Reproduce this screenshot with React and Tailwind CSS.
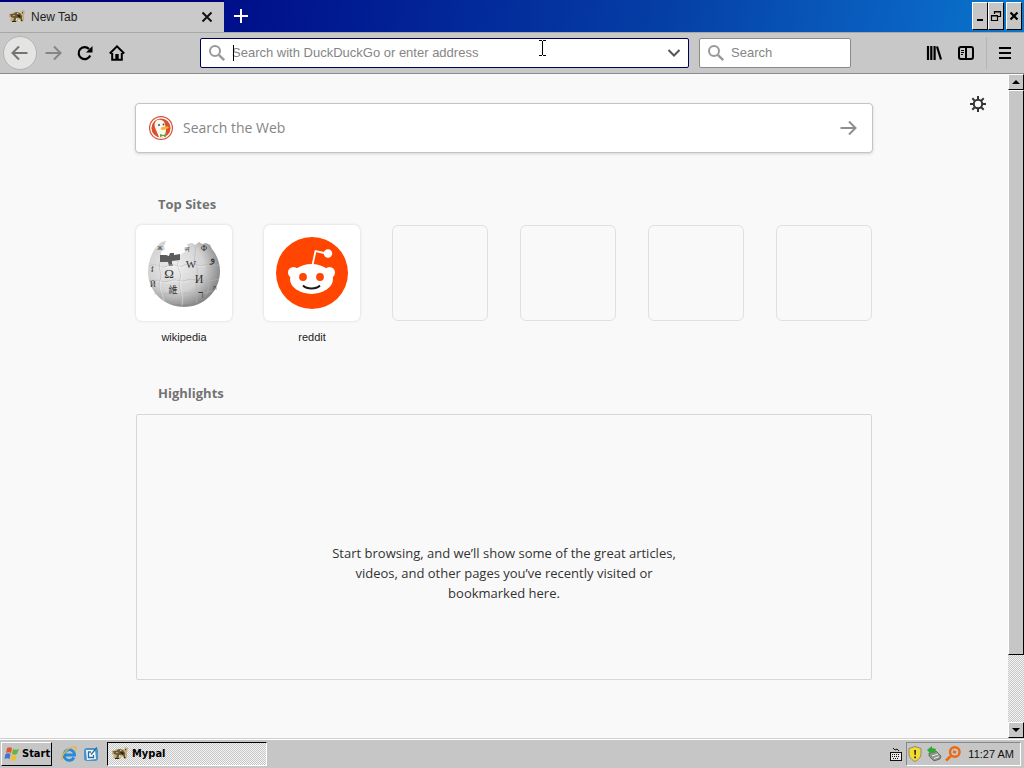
import React, { useState } from "react";

const RAISED = "bg-[#c6c6c6] border border-t-white border-l-white border-r-black border-b-black";
const CHECKER = "bg-[repeating-conic-gradient(#c6c6c6_0_25%,#f4f4f4_0_50%)] bg-[length:2px_2px]";

const SITES = [{ name: "wikipedia", Icon: WikipediaIcon }, { name: "reddit", Icon: RedditIcon }, null, null, null, null];

function MypalIcon() {
  return (
    <svg width="16" height="16" viewBox="0 0 16 16" aria-hidden="true" className="shrink-0">
      <path d="M0 5l3-1 2-1 4 0 3 1 1-3 3 1-1 4 0 4-1 3-2 0-1-2-3 2-4 0-3-1 1-3-2-1z" fill="#c2ae80" />
      <path d="M1 5l3 0 3-2 4 1 2 3 0 4-2-1-1-2-3 2-1 3-2-1 1-3-3-1z" fill="#6b5a36" />
      <path d="M8 6h3l1 2-2 1zM3 12h4v1H3z" fill="#2c251a" />
      <path d="M4 6l2 0-1 1zM8 4l2 1-2 0zM7 9l2 1-2 1zM10 10l1 2-2 0z" fill="#f6efd8" />
      <path d="M13 3l1 2 0-2zM12 10l2 2h-2z" fill="#33291b" />
    </svg>
  );
}

function SearchIcon() {
  return (
    <svg width="18" height="18" viewBox="0 0 18 18" fill="none" stroke="#999" aria-hidden="true" className="shrink-0">
      <circle cx="7" cy="7" r="5" strokeWidth="2" />
      <path d="M10.8 10.8l5.4 5.4" strokeWidth="2.4" />
    </svg>
  );
}

function ArrowIcon({ className }) {
  return (
    <svg width="18" height="18" viewBox="0 0 18 18" fill="none" stroke="currentColor" strokeWidth="2" aria-hidden="true" className={className}>
      <path d="M1.5 9h14.5M10 2.5L16.5 9 10 15.5" />
    </svg>
  );
}

function DuckIcon() {
  return (
    <svg width="24" height="24" viewBox="0 0 24 24" aria-hidden="true" className="shrink-0">
      <circle cx="12" cy="12" r="12" fill="#d94f2f" />
      <circle cx="12" cy="12" r="10.2" fill="none" stroke="#fff" strokeWidth="1.2" />
      <path d="M7 5c2-2 8-2 9 3l1 6-1 6c-1 2-5 2-6 1L7 14C5 10 5 7 7 5z" fill="#fbf7ed" />
      <path d="M13 11c3 0 5-1 7 0-1 2-4 2-6 3-2 0-3-2-1-3z" fill="#f7b52c" />
      <path d="M11 18l3 1 3-1v3l-3-1-3 1z" fill="#5ba545" />
      <circle cx="10" cy="9" r="1" fill="#36546b" />
      <circle cx="14.5" cy="8.5" r=".9" fill="#36546b" />
    </svg>
  );
}

function WikipediaIcon() {
  return (
    <svg width="74" height="72" viewBox="0 0 74 72" aria-hidden="true">
      <defs>
        <radialGradient id="globe" cx="38%" cy="38%" r="65%">
          <stop offset="0" stopColor="#eeeeee" />
          <stop offset=".6" stopColor="#d2d2d2" />
          <stop offset="1" stopColor="#858585" />
        </radialGradient>
      </defs>
      <path d="M19 4l-2 5 1 3-4 3 0 5 7 2h10l3-5 4-2-1-4 4-1-1-3 5-1 3 2 4-3 3 2 4-1 4 2 2 4c5 6 8 14 8 22 0 20-16 36-36 36S1 54 1 35C1 21 8 9 15 5z" fill="url(#globe)" />
      <path d="M13 18h6l3 1 1-3 4 0 0 2 6-1v6l-8 1 0 2 1 3h-4l-1-4h-8z" fill="#5c5c5c" />
      <g fill="none" stroke="#b4b4b4" strokeWidth=".6">
        <path d="M13 25c-2 10 3 10 0 18s2 12 3 20M31 24c-2 9 5 10 2 18s4 14 1 27M48 8c2 10-3 14 1 20s-2 14 1 38M62 13c-2 10 5 15 2 22s0 14-5 23" />
        <path d="M2 29c8-4 11 4 18 0s12 3 18-1 14 3 20 0 9 2 14 0M2 44c8-3 12 3 20 0s12 2 18-1 14 4 32-1M7 57c10-3 15 3 25 0s18 2 33-3" />
      </g>
      <g fill="none" stroke="#fff" strokeWidth=".6" opacity=".6">
        <path d="M14 26c-2 10 3 10 0 18s2 12 3 20M32 25c-2 9 5 10 2 18s4 14 1 27M3 30c8-4 11 4 18 0s12 3 18-1 14 3 20 0M3 45c8-3 12 3 20 0s12 2 18-1" />
      </g>
      <g fill="#333" fontFamily="Liberation Serif, Noto Sans CJK SC, serif" textAnchor="middle">
        <text x="22" y="41" fontSize="13">Ω</text>
        <text x="44" y="31" fontSize="11">W</text>
        <text x="52" y="46" fontSize="12">И</text>
        <text x="26" y="56" fontSize="9">維</text>
        <text x="54" y="61" fontSize="11">ר</text>
        <text x="65" y="25" fontSize="11">و</text>
        <text x="40" y="15" fontSize="8">ন</text>
        <text x="57" y="14" fontSize="8">Ф</text>
        <text x="5" y="35" fontSize="8">វ</text>
        <text x="6" y="50" fontSize="8">Й</text>
        <text x="13" y="13" fontSize="6">Ж</text>
        <text x="68" y="53" fontSize="6">ก</text>
      </g>
      <path d="M24 67l12 1 8-1-7 2z" fill="#858585" />
    </svg>
  );
}

function RedditIcon() {
  return (
    <svg width="72" height="72" viewBox="0 0 72 72" aria-hidden="true">
      <circle cx="36" cy="36" r="36" fill="#ff4500" />
      <circle cx="17.5" cy="35.5" r="5.5" fill="#fff" />
      <circle cx="53.5" cy="35.5" r="5.5" fill="#fff" />
      <ellipse cx="35.5" cy="42" rx="21.5" ry="15" fill="#fff" />
      <path d="M36.5 28l3-14 11 2.5" fill="none" stroke="#fff" strokeWidth="1.8" />
      <circle cx="52" cy="16.5" r="4.2" fill="#fff" />
      <circle cx="27" cy="40" r="3.9" fill="#ff4500" />
      <circle cx="44" cy="40" r="3.9" fill="#ff4500" />
      <path d="M27 48.5c4 4 13 4 17 0" fill="none" stroke="#1a1a1a" strokeWidth="1.9" />
    </svg>
  );
}

function WindowButton({ label, children }) {
  return (
    <button type="button" aria-label={label} className={`w-4 h-7 flex items-center justify-center ${RAISED}`}>
      <svg width="12" height="12" viewBox="0 0 12 12" fill="none" stroke="#000" aria-hidden="true" className="shrink-0">
        {children}
      </svg>
    </button>
  );
}

function TitleBar() {
  return (
    <header className="h-8 flex items-start bg-[linear-gradient(100deg,#000080_0%,#00118c_25%,#053fa6_65%,#0a65c4_90%,#0878cc_100%)]">
      <div className="w-56 h-8 mr-[9px] border-t-2 border-[#00007c] bg-[#cacaca] flex items-center pl-[9px] pr-[11px]">
        <MypalIcon />
        <span className="ml-1.5 flex-1 text-xs text-[#222]">New Tab</span>
        <button type="button" aria-label="Close tab">
          <svg width="12" height="12" viewBox="0 0 12 12" stroke="#111" strokeWidth="2" aria-hidden="true">
            <path d="M1.5 1.5l9 9M10.5 1.5l-9 9" />
          </svg>
        </button>
      </div>
      <button type="button" aria-label="New tab" className="h-8 w-4 flex items-center">
        <svg width="16" height="16" viewBox="0 0 16 16" stroke="#fff" strokeWidth="2" aria-hidden="true">
          <path d="M8 1v14M1 8h14" />
        </svg>
      </button>
      <div className="ml-auto flex pt-0.5 pr-0.5">
        <WindowButton label="Minimize">
          <path d="M3 10h6" strokeWidth="2" />
        </WindowButton>
        <WindowButton label="Restore">
          <path d="M4.5 4V1.5h6v5H8M4 2h7M1.5 5.5h6v5h-6zM1 6h7" strokeWidth="1.2" />
        </WindowButton>
        <div className="w-0.5" />
        <WindowButton label="Close">
          <path d="M2.5 2.5l7 7M9.5 2.5l-7 7" strokeWidth="2.2" />
        </WindowButton>
      </div>
    </header>
  );
}

function Toolbar() {
  const [address, setAddress] = useState("");
  const [query, setQuery] = useState("");

  return (
    <nav className="h-[42px] flex items-center bg-[#c8c8c8] border-t border-b border-t-[#a8a8a8] border-b-[#8c8c8c]">
      <div className="w-[200px] shrink-0 flex items-center pl-[3px]">
        <button type="button" aria-label="Back" className="w-[34px] h-[34px] rounded-full border border-[#b3b3b3] bg-[#e4e4e2] text-[#747474] flex items-center justify-center">
          <ArrowIcon className="rotate-180" />
        </button>
        <button type="button" aria-label="Forward" className="w-8 h-8 text-[#858585] flex items-center justify-center">
          <ArrowIcon />
        </button>
        <button type="button" aria-label="Reload" className="w-8 h-8 flex items-center justify-center">
          <svg width="16" height="16" viewBox="0 0 16 16" fill="none" aria-hidden="true">
            <path d="M13.2 10.5A6 6 0 1 1 12 4" stroke="#000" strokeWidth="2.2" />
            <path d="M15.5 1v6.5H9z" fill="#000" />
          </svg>
        </button>
        <button type="button" aria-label="Home" className="w-8 h-8 flex items-center justify-center">
          <svg width="16" height="16" viewBox="0 0 16 16" fill="none" stroke="#000" strokeWidth="2" aria-hidden="true">
            <path d="M.8 8.5L8 1.4l7.2 7.1M3.2 8v6.8h9.6V8" />
            <path d="M8 15V9" strokeWidth="3.4" />
          </svg>
        </button>
      </div>

      <div className="relative flex-1 h-[30px] rounded-xs border border-[#00005c] bg-white flex items-center pl-[7px] pr-1.5">
        <SearchIcon />
        <input
          aria-label="Address"
          value={address}
          onChange={(e) => setAddress(e.target.value)}
          placeholder="Search with DuckDuckGo or enter address"
          className="ml-1.5 flex-1 min-w-0 text-[13px] text-black placeholder:text-[#858585] outline-none"
        />
        <span className="absolute left-8 top-1.5 w-px h-4 bg-black" />
        <svg width="7" height="16" viewBox="0 0 7 16" fill="none" stroke="#000" aria-hidden="true" className="absolute left-[338px] top-px">
          <path d="M0 .5h3M4 .5h3M3.5 1v14M0 15.5h3M4 15.5h3" />
        </svg>
        <button type="button" aria-label="Show history" className="w-4 h-4 flex items-center justify-center">
          <svg width="14" height="8" viewBox="0 0 14 8" fill="none" stroke="#555" strokeWidth="2" aria-hidden="true">
            <path d="M1.5 1L7 6.5 12.5 1" />
          </svg>
        </button>
      </div>

      <div className="ml-2.5 w-[152px] h-[30px] shrink-0 rounded-xs border border-[#8a8a8a] bg-white flex items-center pl-[7px]">
        <SearchIcon />
        <input
          aria-label="Search"
          value={query}
          onChange={(e) => setQuery(e.target.value)}
          placeholder="Search"
          className="ml-1.5 w-full min-w-0 text-[13px] text-black placeholder:text-[#858585] outline-none"
        />
      </div>

      <div className="w-[173px] shrink-0 flex items-center justify-end pr-[3px]">
        <button type="button" aria-label="Library" className="w-8 h-8 flex items-center justify-center">
          <svg width="16" height="16" viewBox="0 0 16 16" stroke="#000" strokeWidth="2.2" aria-hidden="true">
            <path d="M2 1v14M5.3 1v14M8.6 1v14M11 1.5l4 13" />
          </svg>
        </button>
        <button type="button" aria-label="Sidebars" className="w-8 h-8 flex items-center justify-center">
          <svg width="16" height="16" viewBox="0 0 16 16" fill="none" stroke="#000" aria-hidden="true">
            <rect x="1" y="2" width="14" height="12" rx="2" strokeWidth="2" />
            <path d="M8 2v12" strokeWidth="2" />
            <path d="M3 5.5h3M3 7.5h3M3 9.5h2" />
          </svg>
        </button>
        <span className="ml-1 mr-0.5 w-px h-8 bg-[#b4b4b4]" />
        <button type="button" aria-label="Open menu" className="w-8 h-8 flex items-center justify-center">
          <svg width="14" height="14" viewBox="0 0 14 14" stroke="#000" strokeWidth="2" aria-hidden="true">
            <path d="M1 2h12M1 7h12M1 12h12" />
          </svg>
        </button>
      </div>
    </nav>
  );
}

function Scrollbar() {
  return (
    <div className={`w-4 shrink-0 flex flex-col ${CHECKER}`}>
      <button type="button" aria-label="Scroll up" className={`h-4 flex items-center justify-center ${RAISED}`}>
        <svg width="8" height="4" viewBox="0 0 8 4" aria-hidden="true">
          <path d="M0 4l4-4 4 4z" />
        </svg>
      </button>
      <div className={`h-[565px] ${RAISED}`} />
      <button type="button" aria-label="Scroll down" className={`mt-auto h-4 flex items-center justify-center ${RAISED}`}>
        <svg width="8" height="4" viewBox="0 0 8 4" aria-hidden="true">
          <path d="M0 0l4 4 4-4z" />
        </svg>
      </button>
    </div>
  );
}

function NewTabPage() {
  const [search, setSearch] = useState("");

  return (
    <main className="relative flex-1 px-4 pt-[29px] pb-[58px] bg-[#f9f9f9] font-['Open_Sans','Noto_Sans',sans-serif]">
      <button type="button" aria-label="Customize your New Tab page" className="absolute right-[22px] top-[22px]">
        <svg width="16" height="16" viewBox="0 0 16 16" fill="none" stroke="#333" strokeWidth="2" aria-hidden="true">
          <circle cx="8" cy="8" r="4.2" />
          <path d="M8 0v4M8 12v4M0 8h4M12 8h4M2.3 2.3l2.8 2.8M10.9 10.9l2.8 2.8M13.7 2.3l-2.8 2.8M5.1 10.9l-2.8 2.8" />
        </svg>
      </button>

      <div className="max-w-[738px] mx-auto">
        <form
          onSubmit={(e) => e.preventDefault()}
          className="h-[50px] rounded-sm border border-[#c4c4c4] bg-white shadow-[0_1px_3px_rgba(0,0,0,0.15)] flex items-center pl-[13px] pr-[15px]"
        >
          <DuckIcon />
          <input
            aria-label="Search the Web"
            value={search}
            onChange={(e) => setSearch(e.target.value)}
            placeholder="Search the Web"
            className="ml-2.5 flex-1 min-w-0 text-sm text-black placeholder:text-[#858585] outline-none"
          />
          <button type="submit" aria-label="Search" className="text-[#8e8e8e]">
            <ArrowIcon />
          </button>
        </form>

        <section className="px-px pt-10">
          <h2 className="pl-[22px] text-[13px] leading-[22px] font-bold text-[#737373]">Top Sites</h2>
          <ul className="mt-2.5 flex justify-between">
            {SITES.map((site, i) => (
              <li key={i} className="w-24">
                {site ? (
                  <a href={`#${site.name}`} className="block text-center">
                    <span className="h-24 rounded-md bg-white shadow-[0_0_3px_rgba(0,0,0,0.16)] flex items-center justify-center">
                      <site.Icon />
                    </span>
                    <span className="block mt-2 text-[11px] leading-4 text-[#222] font-['Liberation_Sans',Arial,sans-serif]">{site.name}</span>
                  </a>
                ) : (
                  <div className="h-24 rounded-md border border-[#e0e0e0]" />
                )}
              </li>
            ))}
          </ul>
        </section>

        <section className="px-px pt-[37px]">
          <h2 className="pl-[22px] text-[13px] leading-[22px] font-bold text-[#737373]">Highlights</h2>
          <div className="mt-2.5 h-[266px] rounded-xs border border-[#d7d7d7] flex items-center justify-center pt-[52px]">
            <p className="max-w-[352px] text-center text-[13px] leading-5 text-[#333]">
              Start browsing, and we’ll show some of the great articles, videos, and other pages you’ve recently visited or bookmarked here.
            </p>
          </div>
        </section>
      </div>
    </main>
  );
}

function Taskbar() {
  return (
    <footer className="h-[30px] shrink-0 bg-[#c6c6c6] border-t border-[#d0d0d0]">
      <div className="h-full border-t border-white flex items-center px-px">
        <button type="button" className={`w-[51px] h-6 flex items-center gap-0.5 pl-0.5 text-[11px] font-bold font-['DejaVu_Sans_Condensed','DejaVu_Sans',sans-serif] ${RAISED}`}>
          <svg width="16" height="16" viewBox="0 0 16 16" aria-hidden="true" className="shrink-0">
            <path d="M3 2c2-1 3-1 5 0L7 7C5 6 4 6 2 7z" fill="#e5552d" />
            <path d="M9 3c2 1 4 1 6 0l-2 5c-2 1-3 1-5 0z" fill="#69b43c" />
            <path d="M1.5 8c2-1 3-1 5 0l-1 5c-2-1-3-1-5 0z" fill="#3e74d4" />
            <path d="M7.5 9c2 1 3 1 5 0l-1 5c-2 1-3 1-5 0z" fill="#f3bd2e" />
          </svg>
          Start
        </button>

        <div className="flex gap-1.5 pl-[9px]">
          <button type="button" aria-label="Internet Explorer">
            <svg width="16" height="16" viewBox="0 0 16 16" fill="none" aria-hidden="true">
              <path d="M13 11.5a5.3 5.3 0 1 1 .6-2.5H4" stroke="#268bd8" strokeWidth="2.8" />
              <path d="M1 14.5C-1 9 9 0 14 1c2 1 1 3 0 4" stroke="#e6b740" strokeWidth="1.4" />
            </svg>
          </button>
          <button type="button" aria-label="Show desktop">
            <svg width="16" height="16" viewBox="0 0 16 16" fill="none" aria-hidden="true">
              <rect x="1" y="2" width="14" height="13" rx="3" fill="#4c94c8" />
              <path d="M3 4h9l1 9-9 1z" fill="#f4f9fc" />
              <path d="M8 6H5.5v5.5h5V9M8 8.5l6-7" stroke="#2c6e9f" strokeWidth="1.3" />
            </svg>
          </button>
        </div>

        <button
          type="button"
          className={`ml-2 w-40 h-6 border border-t-black border-l-black border-r-white border-b-white flex items-center gap-1 pl-1 text-[11px] font-bold font-['DejaVu_Sans_Condensed','DejaVu_Sans',sans-serif] ${CHECKER}`}
        >
          <MypalIcon />
          Mypal
        </button>

        <svg width="14" height="14" viewBox="0 0 14 14" fill="none" stroke="#111" aria-hidden="true" className="ml-auto mr-[3px]">
          <path d="M4 1l2 2 2-1 2 2" />
          <rect x="1.5" y="5.5" width="11" height="8" fill="#e8e8e8" />
          <path d="M3 7.5h8M3 9.5h8M4 11.5h6" strokeDasharray="1 1" />
        </svg>
        <div className="h-6 mr-0.5 border border-t-[#888] border-l-[#888] border-r-white border-b-white flex items-center gap-[3px] pr-1.5">
          <svg width="16" height="16" viewBox="0 0 16 16" aria-hidden="true">
            <path d="M8 .5l6 2v5c0 4-3 6.5-6 8-3-1.5-6-4-6-8v-5z" fill="#f4dc2c" stroke="#8a8a7a" />
            <path d="M7.2 4h1.8L8.7 9H7.5zM7.2 10.5h1.8v1.8H7.2z" fill="#222" />
          </svg>
          <svg width="16" height="16" viewBox="0 0 16 16" aria-hidden="true">
            <path d="M3 7l7-2 5 5-1 3-6 2-5-5z" fill="#8e958c" stroke="#4e554d" strokeWidth=".7" />
            <path d="M6 10l6-2M8 12.5l5-2" stroke="#eee" />
            <path d="M1 4l5-4v2l4 1-1 4-4-1v2z" fill="#2faa32" />
          </svg>
          <svg width="16" height="16" viewBox="0 0 16 16" fill="none" stroke="#ea6a12" aria-hidden="true">
            <circle cx="9.8" cy="6" r="4.8" strokeWidth="2.4" />
            <path d="M6.5 9.5l-5.5 5M8 5.5l3 1" strokeWidth="2.4" />
          </svg>
          <time className="ml-1 text-[11px] text-[#111]">11:27 AM</time>
        </div>
      </div>
    </footer>
  );
}

export default function App() {
  return (
    <div className="min-h-screen flex flex-col font-['Liberation_Sans',Arial,sans-serif]">
      <TitleBar />
      <Toolbar />
      <div className="flex-1 flex">
        <NewTabPage />
        <Scrollbar />
      </div>
      <Taskbar />
    </div>
  );
}
